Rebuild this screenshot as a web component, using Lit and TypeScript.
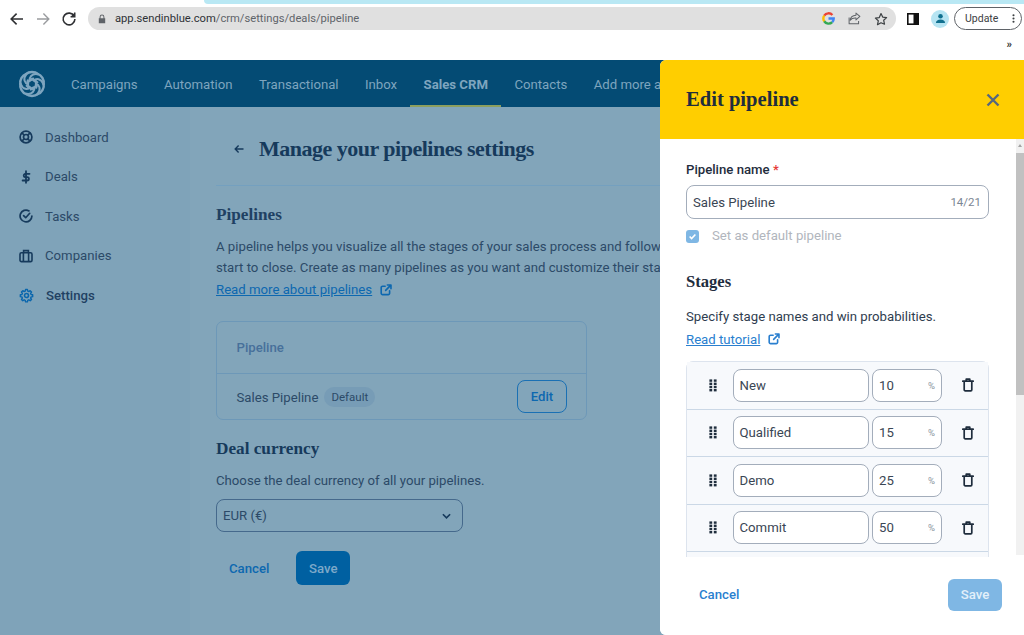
import { LitElement, html, css, svg } from "lit";
import { customElement } from "lit/decorators.js";

const ext = html`<svg class="ext" viewBox="0 0 14 14" width="12" height="12" fill="none" stroke="currentColor" stroke-width="1.9" stroke-linecap="round" stroke-linejoin="round"><path d="M6 2.6H3a1.6 1.6 0 0 0-1.6 1.6v6.6A1.6 1.6 0 0 0 3 12.4h6.6a1.6 1.6 0 0 0 1.6-1.6V8"/><path d="M8.6 1.2h4.2v4.2M12.6 1.4 6.6 7.4"/></svg>`;

const trash = html`<svg viewBox="0 0 14 14" width="14" height="14" fill="none" stroke="#1f2d3d" stroke-width="1.7" stroke-linecap="round" stroke-linejoin="round"><path d="M1.8 3.2h10.4M5.2 3V1.2h3.6V3M3.2 3.4v8.4a1 1 0 0 0 1 1h5.6a1 1 0 0 0 1-1V3.4"/></svg>`;

const drag = html`<svg viewBox="0 0 8 13" width="8" height="13" fill="#1f2d3d">${[0.4, 3.6, 6.8, 10].flatMap((y) => [svg`<rect x="0.4" y="${y}" width="2.8" height="2.4"/>`, svg`<rect x="4.8" y="${y}" width="2.8" height="2.4"/>`])}</svg>`;

const angles = [0, 60, 120, 180, 240, 300];
const logo = html`<svg viewBox="0 0 32 32" width="28" height="28" fill="none" stroke="#7ea5bf" stroke-width="2.3" stroke-linecap="round" stroke-linejoin="round">${angles.map((a) => svg`<g transform="rotate(${a} 16 16)"><path d="M9.2 4.6C12.6 1.4 19.4 1.4 22.8 4.6" stroke-width="2.8"/><path d="M13.4 12.4C12.6 8.6 15.6 3.8 22 4.8M13.4 12.4C15.6 10.6 20 10.8 22.2 14"/></g>`)}</svg>`;

const sideIcons = [
  html`<svg viewBox="0 0 14 14" width="14" height="14" fill="none" stroke="#163a5c" stroke-width="1.7"><circle cx="7" cy="7" r="5.9"/><circle cx="7" cy="7" r="2.5"/><path d="M2.9 2.9 5.2 5.2M11.1 2.9 8.8 5.2M2.9 11.1l2.3-2.3M11.1 11.1 8.8 8.8"/></svg>`,
  html`<svg viewBox="0 0 14 14" width="14" height="14" fill="none" stroke="#163a5c" stroke-width="1.8" stroke-linecap="round"><path d="M10.5 3.8H6a1.7 1.7 0 0 0 0 3.3h2.2a1.7 1.7 0 0 1 0 3.4H3.6M7 1.2v11.6"/></svg>`,
  html`<svg viewBox="0 0 14 14" width="14" height="14" fill="none" stroke="#163a5c" stroke-width="1.7" stroke-linecap="round" stroke-linejoin="round"><path d="M12.9 7A5.9 5.9 0 1 1 10 1.9"/><path d="m4.6 6.6 2.1 2.1 4-4.4"/></svg>`,
  html`<svg viewBox="0 0 14 14" width="14" height="14" fill="none" stroke="#163a5c" stroke-width="1.6"><rect x="1" y="3.8" width="12" height="8.8" rx="1.4"/><path d="M4.6 3.8V1.6h4.8v2.2M4.4 3.8v8.8M9.6 3.8v8.8"/></svg>`,
  html`<svg viewBox="0 0 24 24" width="15" height="15" fill="none" stroke="#0a66ad" stroke-width="2.6" stroke-linejoin="round"><circle cx="12" cy="12" r="3.2"/><path d="M10.3 2.2h3.4l.6 2.9 1.9.8 2.5-1.6 2.4 2.4-1.6 2.5.8 1.9 2.9.6v3.4l-2.9.6-.8 1.9 1.6 2.5-2.4 2.4-2.5-1.6-1.9.8-.6 2.9h-3.4l-.6-2.9-1.9-.8-2.5 1.6-2.4-2.4 1.6-2.5-.8-1.9-2.9-.6v-3.4l2.9-.6.8-1.9-1.6-2.5 2.4-2.4 2.5 1.6 1.9-.8z" transform="translate(12 12) scale(.88) translate(-12 -13)"/></svg>`,
];

const side = ["Dashboard", "Deals", "Tasks", "Companies", "Settings"];
const nav = ["Campaigns", "Automation", "Transactional", "Inbox", "Sales CRM", "Contacts", "Add more apps"];
const stages: [string, string][] = [["New", "10"], ["Qualified", "15"], ["Demo", "25"], ["Commit", "50"], ["", ""]];

@customElement("app-root")
export class AppRoot extends LitElement {
  static styles = css`
    :host { display: block; width: 1024px; height: 635px; overflow: hidden; position: relative; font-family: Roboto, "Liberation Sans", sans-serif; font-size: 13.2px; color: #2c4a68; background: #fff; }
    * { box-sizing: border-box; }
    .chrome { height: 60px; background: #fff; display: flex; flex-direction: column; }
    .strip { height: 4px; background: #b9e8f4; margin-left: 204px; border-bottom-left-radius: 5px; }
    .toolbar { height: 26px; display: flex; align-items: center; padding: 3px 2px 0 8px; flex: none; }
    .navbtns { display: flex; gap: 8px; align-items: center; width: 80px; }
    .navbtns svg { width: 18px; height: 18px; display: block; }
    .addr { width: 808px; height: 23px; background: #e0e0e0; border-radius: 12px; display: flex; align-items: center; padding: 0 8px 0 10px; flex: none; }
    .url { margin-left: 9px; font-size: 11.2px; color: #60646a; flex: 1; }
    .url b { font-weight: 400; color: #2f3236; }
    .addr-icons { display: flex; align-items: center; gap: 13px; }
    .panelbtn { margin-left: 11px; display: block; }
    .avatar { margin-left: 12px; width: 18px; height: 18px; border-radius: 50%; background: #b6e4f2; display: flex; align-items: center; justify-content: center; flex: none; }
    .update { margin-left: 5px; width: 68px; height: 23px; border: 1px solid #5f6368; border-radius: 12px; display: flex; align-items: center; justify-content: space-between; padding: 0 6px 0 10px; font-size: 10.5px; color: #3c4043; flex: none; }
    .bookmarks { flex: 1; display: flex; justify-content: flex-end; align-items: center; padding: 0 12px 2px 0; font-size: 11px; font-weight: 700; color: #333; }
    .topnav { height: 47px; background: #044b74; display: flex; align-items: stretch; padding-left: 18px; overflow: hidden; white-space: nowrap; }
    .logo { display: flex; align-items: center; width: 40px; flex: none; }
    .topnav a { display: flex; align-items: center; padding: 3px 13.2px 0 13.2px; color: #7ea5bf; border-bottom: 2px solid transparent; }
    .topnav a:first-of-type { padding-left: 13px; }
    .topnav a.on { font-weight: 700; border-bottom-color: #8d9f5e; }
    .body { height: 528px; display: flex; background: #82a5ba; }
    .sidebar { width: 190px; flex: none; background: #7fa3b9; padding-top: 10.4px; display: flex; flex-direction: column; }
    .side-item { height: 39.5px; display: flex; align-items: center; gap: 12px; padding-left: 19px; color: #2c4a68; white-space: nowrap; }
    .side-item.on { color: #1f4163; font-weight: 500; }
    .side-item svg { display: block; flex: none; }
    .main { flex: 1; padding: 0 26px; overflow: hidden; }
    .title { height: 79px; display: flex; align-items: center; gap: 14px; padding: 5px 0 0 17px; border-bottom: 1px solid #74a0bf; width: 444px; white-space: nowrap; }
    .serif { font-family: "Liberation Serif", serif; font-weight: 700; color: #163a5c; }
    h1 { margin: 0; font-size: 22px; letter-spacing: -0.5px; }
    h2 { margin: 0; font-size: 17.2px; line-height: 24px; }
    .p-h { margin-top: 17px; color: #1f4163; }
    .para { margin-top: 9px; line-height: 21px; white-space: nowrap; }
    .link { color: #0d68b0; text-decoration: underline; }
    .linkrow { display: flex; align-items: center; gap: 8px; line-height: 21px; margin-top: 1px; color: #0d68b0; }
    .ext { display: block; }
    .card { margin-top: 21px; width: 371px; height: 99px; border: 1px solid #6d98b8; border-radius: 7px; }
    .card-h { height: 52px; border-bottom: 1px solid #6d98b8; display: flex; align-items: center; padding-left: 19.5px; font-weight: 500; color: #47709a; }
    .card-r { height: 46px; display: flex; align-items: center; padding: 0 19px 0 19.5px; }
    .badge { margin-left: 6px; height: 20px; padding: 0 7px; border-radius: 10px; background: #779cb6; font-size: 11.5px; display: flex; align-items: center; }
    .edit { margin: -2px 0 0 auto; width: 50px; height: 33px; border: 1px solid #1a70b4; border-radius: 8px; display: flex; align-items: center; justify-content: center; color: #0d68b0; font-weight: 500; }
    .dc { margin-top: 17px; }
    .choose { margin-top: 9px; line-height: 21px; }
    .select { margin-top: 8px; width: 247px; height: 33px; border: 1px solid #45698c; border-radius: 8px; display: flex; align-items: center; justify-content: space-between; padding: 0 11px 0 6px; }
    .actions { margin-top: 19px; display: flex; align-items: center; gap: 26.6px; padding-left: 13px; }
    .cancel { color: #0d68b0; font-weight: 500; }
    .save { width: 54.5px; height: 34px; border-radius: 6px; background: #0060a1; color: #7ea9c9; font-weight: 500; display: flex; align-items: center; justify-content: center; }
    .panel { position: absolute; left: 660px; top: 60px; width: 364px; height: 575px; background: #fff; border-radius: 6px 0 0 6px; overflow: hidden; display: flex; flex-direction: column; color: #2f3d4f; }
    .p-head { height: 79px; background: #ffce00; display: flex; align-items: center; justify-content: space-between; padding: 0 24px 0 26px; flex: none; }
    .p-head h3 { margin: 0; font-size: 20.6px; color: #1f2d3d; }
    .p-main { flex: none; height: 418px; display: flex; position: relative; overflow: hidden; }
    .p-scroll { flex: 1; padding: 22px 27px 0 26px; overflow: hidden; min-width: 0; }
    .scrollbar { width: 8px; background: #f1f1f1; flex: none; height: 416px; display: flex; flex-direction: column; }
    .arrow { height: 14px; display: flex; justify-content: center; padding-top: 5px; }
    .arrow i { width: 0; height: 0; border: 2.5px solid transparent; border-top: 0; border-bottom: 3px solid #a3a3a3; }
    .thumb { height: 242px; background: #c1c1c1; }
    .label { line-height: 18px; font-weight: 500; color: #1f2d3d; }
    .label span { color: #e53935; }
    .field { margin-top: 6px; height: 34px; border: 1px solid #a3adbb; border-radius: 8px; display: flex; align-items: center; justify-content: space-between; padding: 0 6px; color: #3a4654; }
    .counter { font-size: 11.5px; color: #7b8694; padding-right: 1px; }
    .check { margin-top: 9px; display: flex; align-items: center; gap: 13px; line-height: 16px; color: #b1b6bd; }
    .box { width: 13px; height: 13px; border-radius: 3px; background: #7fb7e4; display: flex; align-items: center; justify-content: center; flex: none; }
    .stages { margin-top: 26px; color: #1f2d3d; line-height: 24px; font-size: 16.6px; }
    .spec { margin-top: 11.5px; line-height: 21px; }
    .p-link { color: #2a7fcf; display: flex; align-items: center; gap: 8px; line-height: 21px; margin-top: 2px; }
    .p-link .link { color: #2a7fcf; }
    .table { margin-top: 11.5px; border: 1px solid #dde4ee; border-radius: 7px 7px 0 0; }
    .row { height: 47.5px; background: #f7f9fc; border-bottom: 1px solid #cbd8e6; display: flex; align-items: center; }
    .grip { width: 46px; display: flex; justify-content: center; padding-left: 6px; flex: none; }
    .grip svg, .del svg { display: block; }
    .cell { height: 33px; background: #fff; border: 1px solid #a3adbb; border-radius: 8px; display: flex; align-items: center; padding: 0 5px 0 5.5px; color: #3a4654; flex: none; }
    .name { width: 136px; }
    .pct { width: 70px; margin-left: 3px; justify-content: space-between; padding: 0 6px; }
    .pct small { font-size: 9.5px; color: #8b95a1; }
    .del { width: 52px; display: flex; justify-content: center; flex: none; }
    .p-foot { flex: 1; display: flex; align-items: center; justify-content: space-between; padding: 0 22px 3px 39px; background: #fff; }
    .p-cancel { color: #2a7fcf; font-weight: 500; }
    .p-save { width: 54px; height: 32px; border-radius: 6px; background: #7fb7e4; color: #e3f0fa; font-weight: 500; display: flex; align-items: center; justify-content: center; }
  `;

  render() {
    return html`
      <div class="chrome">
        <div class="strip"></div>
        <div class="toolbar">
          <div class="navbtns">
            <svg viewBox="0 0 18 18" fill="none" stroke="#2f3033" stroke-width="1.6"><path d="M15 9H3.6M8.6 3.6 3.2 9l5.4 5.4"/></svg>
            <svg viewBox="0 0 18 18" fill="none" stroke="#9a9c9f" stroke-width="1.4"><path d="M3 9h11.4M9.4 3.6 14.8 9l-5.4 5.4"/></svg>
            <svg viewBox="0 0 18 18" fill="none" stroke="#2f3033" stroke-width="1.6"><path d="M14.2 6.2A5.9 5.9 0 1 0 14.9 9"/><path d="M14.8 2.6v4.2h-4.2" stroke-width="1.4" fill="#2f3033"/></svg>
          </div>
          <div class="addr">
            <svg viewBox="0 0 10 12" width="8" height="10" fill="#5f6368"><path d="M2 5V3.4a3 3 0 0 1 6 0V5h1v6.4H1V5zm1.2 0h3.6V3.4a1.8 1.8 0 0 0-3.6 0z"/></svg>
            <div class="url"><b>app.sendinblue.com</b>/crm/settings/deals/pipeline</div>
            <div class="addr-icons">
              <svg viewBox="0 0 14 14" width="13" height="13" fill="none" stroke-width="2.6"><path d="M11.2 3.2A5.6 5.6 0 0 0 2.4 4" stroke="#ea4335"/><path d="M2.4 4a5.6 5.6 0 0 0 0 6" stroke="#fbbc05"/><path d="M2.4 10a5.6 5.6 0 0 0 8.6.9" stroke="#34a853"/><path d="M11 10.9A5.4 5.4 0 0 0 12.6 7H7" stroke="#4285f4"/></svg>
              <svg viewBox="0 0 14 14" width="13" height="13" fill="none" stroke="#5f6368" stroke-width="1.1" stroke-linejoin="round"><path d="M12.8 4.8 8.6 1.2v2.2C4.4 3.6 2.6 6 2.2 9c1.4-1.8 3.4-2.6 6.4-2.4v2z"/><path d="M1.2 6v6.6h10.2V9.6"/></svg>
              <svg viewBox="0 0 14 14" width="14" height="14" fill="none" stroke="#3c4043" stroke-width="1.2" stroke-linejoin="round"><path d="m7 1.5 1.7 3.6 3.9.5-2.9 2.7.8 3.9L7 10.8l-3.5 1.9.8-3.9-2.9-2.7 3.9-.5z"/></svg>
            </div>
          </div>
          <svg class="panelbtn" viewBox="0 0 12 12" width="12" height="12"><rect x="0.8" y="0.8" width="10.4" height="10.4" fill="#fff" stroke="#111" stroke-width="1.6"/><rect x="6.5" y="1" width="5" height="10" fill="#111"/></svg>
          <div class="avatar"><svg viewBox="0 0 12 12" width="11" height="11" fill="#10708f"><circle cx="6" cy="3.6" r="2.5"/><path d="M1 11c0-2.6 2.2-4 5-4s5 1.4 5 4z"/></svg></div>
          <div class="update">Update<svg viewBox="0 0 4 12" width="3" height="11" fill="#3c4043"><circle cx="2" cy="1.6" r="1.4"/><circle cx="2" cy="6" r="1.4"/><circle cx="2" cy="10.4" r="1.4"/></svg></div>
        </div>
        <div class="bookmarks">»</div>
      </div>
      <div class="topnav">
        <div class="logo">${logo}</div>
        ${nav.map((n) => html`<a class=${n === "Sales CRM" ? "on" : ""}>${n}</a>`)}
      </div>
      <div class="body">
        <div class="sidebar">
          ${side.map((s, i) => html`<div class="side-item ${s === "Settings" ? "on" : ""}">${sideIcons[i]}<span>${s}</span></div>`)}
        </div>
        <div class="main">
          <div class="title">
            <svg viewBox="0 0 12 12" width="12" height="12" fill="none" stroke="#163a5c" stroke-width="1.4"><path d="M10.5 6H2M5.6 2.6 2.2 6l3.4 3.4"/></svg>
            <h1 class="serif">Manage your pipelines settings</h1>
          </div>
          <h2 class="serif p-h">Pipelines</h2>
          <div class="para">A pipeline helps you visualize all the stages of your sales process and follow your deals from<br />start to close. Create as many pipelines as you want and customize their stages.</div>
          <div class="linkrow"><span class="link">Read more about pipelines</span>${ext}</div>
          <div class="card">
            <div class="card-h">Pipeline</div>
            <div class="card-r"><span>Sales Pipeline</span><span class="badge">Default</span><span class="edit">Edit</span></div>
          </div>
          <h2 class="serif dc">Deal currency</h2>
          <div class="choose">Choose the deal currency of all your pipelines.</div>
          <div class="select"><span>EUR (€)</span><svg viewBox="0 0 10 6" width="9" height="6" fill="none" stroke="#163a5c" stroke-width="1.8"><path d="m1 1 4 4 4-4"/></svg></div>
          <div class="actions"><span class="cancel">Cancel</span><span class="save">Save</span></div>
        </div>
      </div>
      <div class="panel">
        <div class="p-head">
          <h3 class="serif">Edit pipeline</h3>
          <svg viewBox="0 0 14 14" width="14" height="14" fill="none" stroke="#56677e" stroke-width="2.4"><path d="m1.5 1.5 11 11M12.5 1.5l-11 11"/></svg>
        </div>
        <div class="p-main">
          <div class="p-scroll">
            <div class="label">Pipeline name <span>*</span></div>
            <div class="field"><span>Sales Pipeline</span><span class="counter">14/21</span></div>
            <div class="check"><span class="box"><svg viewBox="0 0 10 10" width="9" height="9" fill="none" stroke="#fff" stroke-width="1.8"><path d="m1.8 5 2.2 2.2 4.2-4.4"/></svg></span><span>Set as default pipeline</span></div>
            <h2 class="serif stages">Stages</h2>
            <div class="spec">Specify stage names and win probabilities.</div>
            <div class="p-link"><span class="link">Read tutorial</span>${ext}</div>
            <div class="table">
              ${stages.map(([n, p]) => html`<div class="row">
                <div class="grip">${n ? drag : ""}</div>
                <div class="cell name">${n}</div>
                <div class="cell pct"><span>${p}</span>${n ? html`<small>%</small>` : ""}</div>
                <div class="del">${n ? trash : ""}</div>
              </div>`)}
            </div>
          </div>
          <div class="scrollbar"><div class="arrow"><i></i></div><div class="thumb"></div></div>
        </div>
        <div class="p-foot"><span class="p-cancel">Cancel</span><span class="p-save">Save</span></div>
      </div>
    `;
  }
}
